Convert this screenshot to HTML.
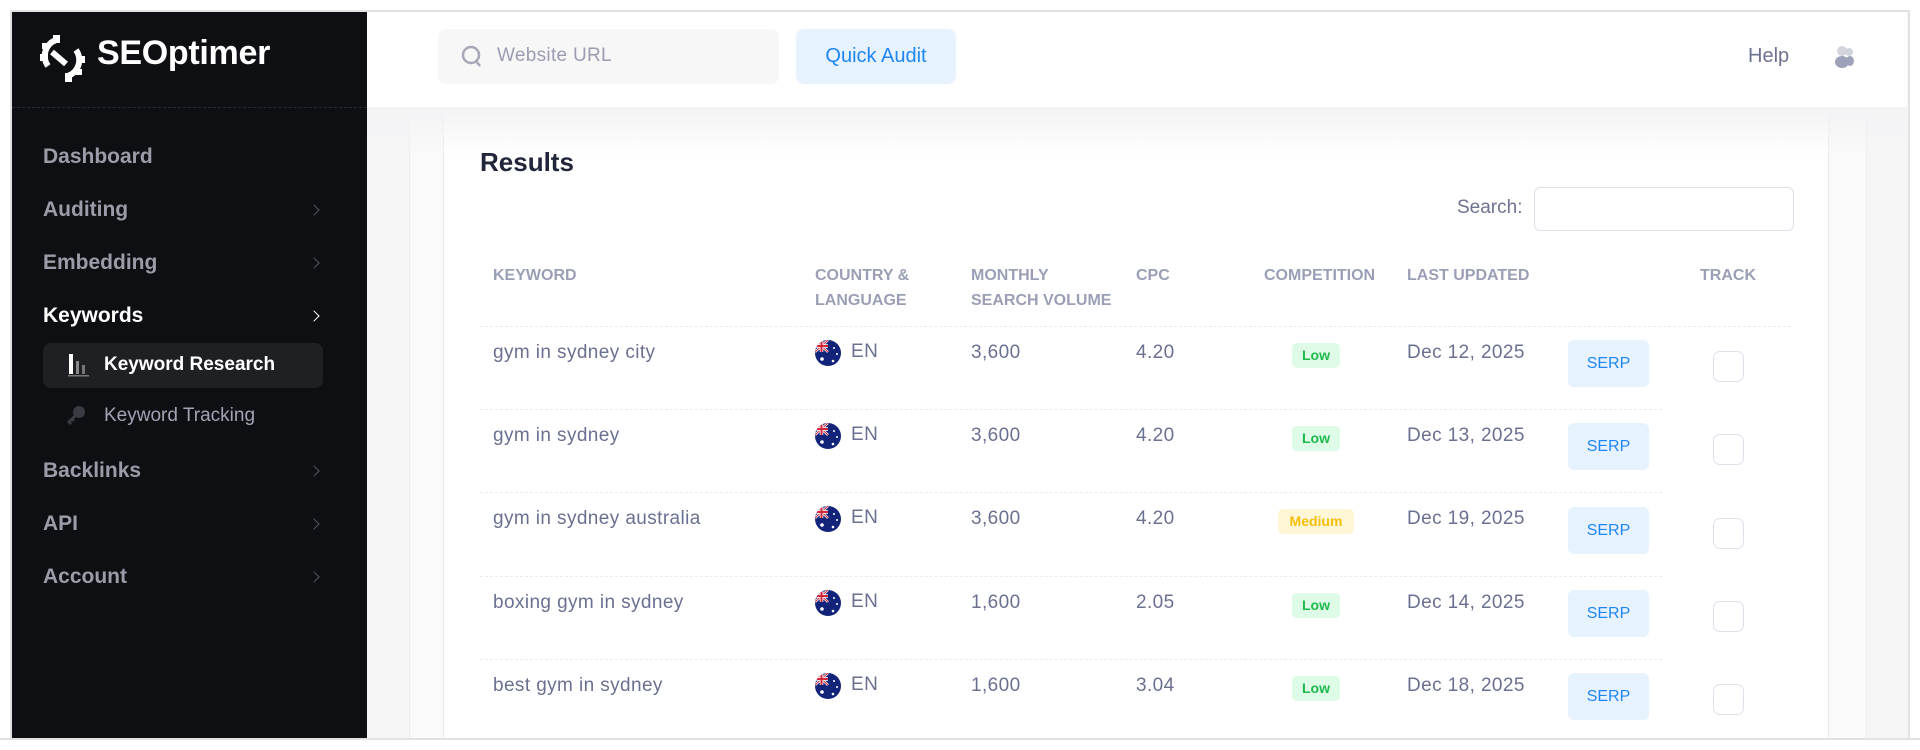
<!DOCTYPE html>
<html><head><meta charset="utf-8"><style>
*{margin:0;padding:0;box-sizing:border-box}
body{width:1920px;height:750px;background:#fff;font-family:"Liberation Sans",sans-serif;position:relative;overflow:hidden}
.a{position:absolute}
.frame{left:10px;top:10px;width:1900px;height:730px;border:2px solid #e2e2e2;background:#f6f6f7}
.side{left:12px;top:12px;width:355px;height:726px;background:#0e0f13}
.menu{left:43px;font-size:21px;font-weight:bold;color:#9c9ca8;line-height:24px}
.chev{left:310px;width:8px;height:8px;border-top:1.5px solid #55565f;border-right:1.5px solid #55565f;transform:rotate(45deg)}
.hd{font-size:16px;font-weight:bold;color:#9a9fb5;line-height:25px}
.td{font-size:19px;color:#6a7090;line-height:22px;letter-spacing:0.4px}
.div{left:480px;width:1182px;height:0;border-top:1px dashed #ececef}
.badge{height:25px;border-radius:5px;font-size:14px;font-weight:bold;line-height:25px;text-align:center}
.low{background:#ddfbe6;color:#1fba4d;width:48px;left:1292px}
.med{background:#fff6d6;color:#f3bf0c;width:76px;left:1278px}
.serp{left:1568px;width:81px;height:47px;background:#e7f2ff;border-radius:6px;color:#1f86f5;font-size:16px;text-align:center;line-height:47px}
.cb{left:1713px;width:31px;height:31px;border:1.5px solid #dfe0ea;border-radius:7px;background:#fff}
.flag{left:815px}
</style></head><body>
<div class="a frame"></div>
<div class="a side"></div>
<svg class="a" style="left:36px;top:32px" width="52" height="52" viewBox="0 0 52 52">
<g fill="none" stroke="#fff" stroke-width="6">
<path d="M20 8 A17 17 0 0 0 12 34"/>
<path d="M32 44 A17 17 0 0 0 40 18"/>
<path d="M16 20 L30 32"/>
</g>
<g fill="#fff"><rect x="17" y="3" width="7" height="8"/><rect x="4" y="22" width="8" height="7"/><rect x="29" y="41" width="7" height="9"/><rect x="41" y="24" width="8" height="7"/><rect x="6" y="11" width="6" height="6"/><rect x="40" y="37" width="6" height="6"/></g>
</svg>
<div class="a" style="left:97px;top:34px;font-size:34px;font-weight:bold;color:#fff;letter-spacing:-0.3px">SEOptimer</div>
<div class="a" style="left:12px;top:107px;width:355px;border-top:1px dashed #2a2b31"></div>
<div class="a menu" style="top:145px">Dashboard</div>
<div class="a menu" style="top:198px">Auditing</div><div class="a chev" style="top:206px"></div>
<div class="a menu" style="top:251px">Embedding</div><div class="a chev" style="top:259px"></div>
<div class="a menu" style="top:304px;color:#fff">Keywords</div><div class="a chev" style="top:312px;border-color:#fff"></div>
<div class="a" style="left:43px;top:343px;width:280px;height:45px;background:#1f2024;border-radius:8px"></div>
<svg class="a" style="left:67px;top:352px" width="24" height="26"><rect x="2" y="2" width="4" height="20" fill="#fff"/><rect x="9" y="9" width="3" height="13" fill="#888"/><rect x="15" y="13" width="3" height="9" fill="#777"/><rect x="1" y="23" width="21" height="1.5" fill="#777"/></svg>
<div class="a" style="left:104px;top:354px;font-size:19px;color:#fff;font-weight:bold">Keyword Research</div>
<svg class="a" style="left:66px;top:404px" width="22" height="22"><circle cx="13" cy="8" r="6" fill="#3a3b42"/><path d="M9 12 L3 18 L5 20 M6 15 L8 17" stroke="#3a3b42" stroke-width="3" fill="none"/></svg>
<div class="a" style="left:104px;top:405px;font-size:19px;color:#a3a3b3">Keyword Tracking</div>
<div class="a menu" style="top:459px">Backlinks</div><div class="a chev" style="top:467px"></div>
<div class="a menu" style="top:512px">API</div><div class="a chev" style="top:520px"></div>
<div class="a menu" style="top:565px">Account</div><div class="a chev" style="top:573px"></div>

<div class="a" style="left:367px;top:12px;width:1540px;height:95px;background:#fff"></div>
<div class="a" style="left:438px;top:29px;width:341px;height:55px;background:#f7f7f8;border-radius:8px"></div>
<svg class="a" style="left:461px;top:45px" width="22" height="24"><circle cx="10" cy="10" r="8" stroke="#a6a8b6" stroke-width="2.5" fill="none"/><path d="M15 16 L19 21" stroke="#a6a8b6" stroke-width="2.5"/></svg>
<div class="a" style="left:497px;top:45px;font-size:19px;color:#9a9db0;letter-spacing:0.3px">Website URL</div>
<div class="a" style="left:796px;top:29px;width:160px;height:55px;background:#e7f2ff;border-radius:8px;color:#1f86f5;font-size:20px;text-align:center;line-height:55px">Quick Audit</div>
<div class="a" style="left:1748px;top:45px;font-size:20px;color:#6d7390">Help</div>
<svg class="a" style="left:1831px;top:44px" width="26" height="26"><circle cx="11" cy="7" r="5" fill="#d3d5de"/><circle cx="18" cy="8" r="4" fill="#d3d5de"/><ellipse cx="11" cy="18" rx="7" ry="6" fill="#9ea2b8"/><ellipse cx="19" cy="17" rx="4" ry="5" fill="#9ea2b8"/></svg>

<div class="a" style="left:367px;top:107px;width:1540px;height:631px;background:#f6f6f7"></div>
<div class="a" style="left:409px;top:107px;width:1458px;height:631px;background:#fafafa;border-left:1px solid #eeeef0;border-right:1px solid #eeeef0"></div>
<div class="a" style="left:443px;top:107px;width:1386px;height:631px;background:#fff;border-left:1px solid #ededf0;border-right:1px solid #ededf0"></div>
<div class="a" style="left:367px;top:107px;width:1540px;height:50px;background:linear-gradient(#f3f3f5,rgba(255,255,255,0))"></div>
<div class="a" style="left:480px;top:147px;font-size:26px;font-weight:bold;color:#22263a">Results</div>
<div class="a" style="left:1457px;top:197px;font-size:19px;color:#6d7390">Search:</div>
<div class="a" style="left:1534px;top:187px;width:260px;height:44px;border:1.5px solid #dfe0ea;border-radius:6px;background:#fff"></div>
<div class="a hd" style="left:493px;top:263px">KEYWORD</div>
<div class="a hd" style="left:815px;top:263px">COUNTRY &amp;<br>LANGUAGE</div>
<div class="a hd" style="left:971px;top:263px">MONTHLY<br>SEARCH VOLUME</div>
<div class="a hd" style="left:1136px;top:263px">CPC</div>
<div class="a hd" style="left:1264px;top:263px">COMPETITION</div>
<div class="a hd" style="left:1407px;top:263px">LAST UPDATED</div>
<div class="a hd" style="left:1700px;top:263px">TRACK</div>
<div class="a div" style="top:326px;width:1311px"></div>
<div class="a div" style="top:409px"></div>
<div class="a div" style="top:492px"></div>
<div class="a div" style="top:576px"></div>
<div class="a div" style="top:659px"></div>

<svg width="0" height="0" style="position:absolute"><defs><g id="au"><circle cx="13" cy="13" r="13" fill="#12237a"/><clipPath id="c"><circle cx="13" cy="13" r="13"/></clipPath><g clip-path="url(#c)"><rect x="0" y="0" width="13" height="12" fill="#12237a"/><path d="M0 0 L13 12 M13 0 L0 12" stroke="#fff" stroke-width="2.5"/><path d="M0 0 L13 12 M13 0 L0 12" stroke="#d2263a" stroke-width="1"/><path d="M6.5 0 V12 M0 6 H13" stroke="#fff" stroke-width="3.5"/><path d="M6.5 0 V12 M0 6 H13" stroke="#d2263a" stroke-width="2"/></g><circle cx="7" cy="19" r="1.8" fill="#fff"/><circle cx="19" cy="8" r="1" fill="#fff"/><circle cx="22" cy="14" r="1" fill="#fff"/><circle cx="18" cy="21" r="1.3" fill="#fff"/></g></defs></svg>

<div class="a td" style="left:493px;top:342px">gym in sydney city</div>
<svg class="a flag" style="top:340px" width="26" height="26"><use href="#au"/></svg>
<div class="a td" style="left:851px;top:341px">EN</div>
<div class="a td" style="left:971px;top:342px">3,600</div>
<div class="a td" style="left:1136px;top:342px">4.20</div>
<div class="a badge low" style="top:343px">Low</div>
<div class="a td" style="left:1407px;top:342px">Dec 12, 2025</div>
<div class="a serp" style="top:340px">SERP</div>
<div class="a cb" style="top:351px"></div>

<div class="a td" style="left:493px;top:425px">gym in sydney</div>
<svg class="a flag" style="top:423px" width="26" height="26"><use href="#au"/></svg>
<div class="a td" style="left:851px;top:424px">EN</div>
<div class="a td" style="left:971px;top:425px">3,600</div>
<div class="a td" style="left:1136px;top:425px">4.20</div>
<div class="a badge low" style="top:426px">Low</div>
<div class="a td" style="left:1407px;top:425px">Dec 13, 2025</div>
<div class="a serp" style="top:423px">SERP</div>
<div class="a cb" style="top:434px"></div>

<div class="a td" style="left:493px;top:508px">gym in sydney australia</div>
<svg class="a flag" style="top:506px" width="26" height="26"><use href="#au"/></svg>
<div class="a td" style="left:851px;top:507px">EN</div>
<div class="a td" style="left:971px;top:508px">3,600</div>
<div class="a td" style="left:1136px;top:508px">4.20</div>
<div class="a badge med" style="top:509px">Medium</div>
<div class="a td" style="left:1407px;top:508px">Dec 19, 2025</div>
<div class="a serp" style="top:507px">SERP</div>
<div class="a cb" style="top:518px"></div>

<div class="a td" style="left:493px;top:592px">boxing gym in sydney</div>
<svg class="a flag" style="top:590px" width="26" height="26"><use href="#au"/></svg>
<div class="a td" style="left:851px;top:591px">EN</div>
<div class="a td" style="left:971px;top:592px">1,600</div>
<div class="a td" style="left:1136px;top:592px">2.05</div>
<div class="a badge low" style="top:593px">Low</div>
<div class="a td" style="left:1407px;top:592px">Dec 14, 2025</div>
<div class="a serp" style="top:590px">SERP</div>
<div class="a cb" style="top:601px"></div>

<div class="a td" style="left:493px;top:675px">best gym in sydney</div>
<svg class="a flag" style="top:673px" width="26" height="26"><use href="#au"/></svg>
<div class="a td" style="left:851px;top:674px">EN</div>
<div class="a td" style="left:971px;top:675px">1,600</div>
<div class="a td" style="left:1136px;top:675px">3.04</div>
<div class="a badge low" style="top:676px">Low</div>
<div class="a td" style="left:1407px;top:675px">Dec 18, 2025</div>
<div class="a serp" style="top:673px">SERP</div>
<div class="a cb" style="top:684px"></div>
<div class="a" style="left:0;top:738px;width:1920px;height:12px;background:#fff;border-top:2px solid #e2e2e2"></div>
</body></html>
